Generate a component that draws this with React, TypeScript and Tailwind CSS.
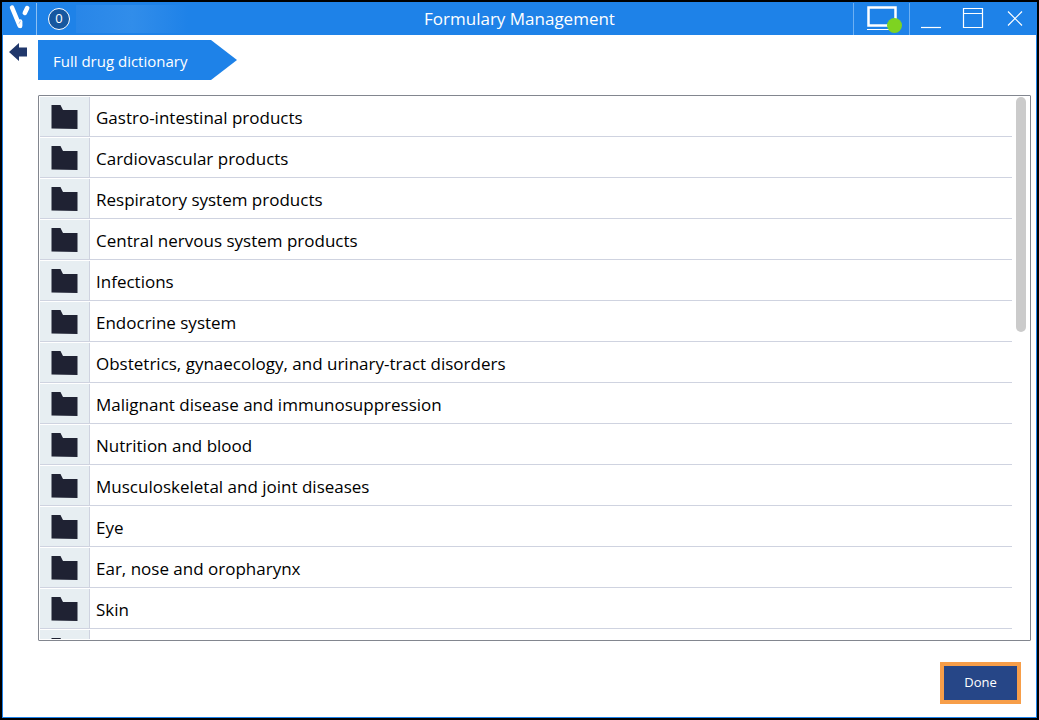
const categories = [
  "Gastro-intestinal products",
  "Cardiovascular products",
  "Respiratory system products",
  "Central nervous system products",
  "Infections",
  "Endocrine system",
  "Obstetrics, gynaecology, and urinary-tract disorders",
  "Malignant disease and immunosuppression",
  "Nutrition and blood",
  "Musculoskeletal and joint diseases",
  "Eye",
  "Ear, nose and oropharynx",
  "Skin",
];

export default function App() {
  return (
    <div className="h-screen border-2 border-black font-['Open_Sans','Noto_Sans',sans-serif]">
      <div className="flex h-full flex-col border border-[#1e82e8] bg-white">
        <TitleBar />

        {/* Breadcrumb */}
        <nav className="flex items-start pt-[5px]">
          <button aria-label="Back" className="flex h-6 w-[35px] shrink-0 items-center pl-1.5">
            <svg width="18" height="18" viewBox="0 0 18 18" fill="#20376b">
              <path d="M0 9 10 0v4.5H18v9H10V18Z" />
            </svg>
          </button>
          <a href="#dictionary" className="flex h-10 text-[15px] text-white">
            <span className="flex items-center bg-[#1e82e8] pt-0.5 pr-6 pl-[15px]">Full drug dictionary</span>
            <svg width="26" height="40" viewBox="0 0 26 40" fill="#1e82e8">
              <path d="M0 0 26 20 0 40Z" />
            </svg>
          </a>
        </nav>

        <main className="mt-[15px] mr-[5px] ml-[35px] flex min-h-0 flex-1 rounded-[1px] border border-[#82868f] px-px pb-px">
          <ul className="min-w-0 flex-1 overflow-hidden">
            {categories.map((name) => (
              <CategoryRow key={name} name={name} />
            ))}
            <CategoryRow name="" />
          </ul>
          <div className="ml-1 w-[13px] shrink-0 pt-px">
            <div className="h-[235px] w-2.5 rounded-full bg-[#cbcbcb]" />
          </div>
        </main>

        <footer className="flex justify-end pt-[21px] pr-[15px] pb-[13px]">
          <button className="h-[42px] w-[81px] border-4 border-[#f79e49] bg-[#264687] text-[13px] text-white">Done</button>
        </footer>
      </div>
    </div>
  );
}

function TitleBar() {
  return (
    <header className="grid h-8 shrink-0 grid-cols-[1fr_auto_1fr] items-center bg-[#1e82e8] text-white">
      <div className="flex h-8 items-center">
        <div className="h-8 w-[34px] border-r border-[#8dc0f4]">
          <svg width="33" height="32" viewBox="0 0 33 32" fill="none" stroke="white" strokeLinecap="round">
            <path d="M9 4.5 16.5 22.5" strokeWidth="4.5" />
            <path d="M17.2 18.5V23" strokeWidth="4.4" />
            <path d="M16 20.5 17.5 18" stroke="#1e82e8" strokeWidth="0.4" />
            <path d="M21.8 10 24.2 5" strokeWidth="4.5" />
          </svg>
        </div>
        <span className="ml-[11px] flex size-[22px] items-center justify-center rounded-full border border-white bg-[#16579f] text-[13px]">
          0
        </span>
        <div className="ml-1.5 h-7 w-28 bg-linear-to-r from-[#2886e8] via-[#318dea] to-[#1e82e8]" />
      </div>

      <h1 className="text-[17px]">Formulary Management</h1>

      <div className="flex h-8 justify-end">
        <div className="w-[57px] border-x border-[#6db0f3]">
          <svg width="55" height="32" viewBox="0 0 55 32" fill="none" stroke="white">
            <rect x="14.5" y="4.5" width="27" height="18" strokeWidth="2.5" />
            <path d="M13 26.5h28" />
            <circle cx="40.5" cy="22.5" r="7.5" fill="#7ed321" stroke="none" />
          </svg>
        </div>
        <WindowButton label="Minimise" path="M11 24.5h20" />
        <WindowButton label="Maximise" path="M11.5 5.5h19v19h-19zM11.5 10.5h19" />
        <WindowButton label="Close" path="M14 8.5 28 22.5M28 8.5 14 22.5" />
      </div>
    </header>
  );
}

function WindowButton({ label, path }: { label: string; path: string }) {
  return (
    <button aria-label={label} className="h-8 w-[42px]">
      <svg width="42" height="32" viewBox="0 0 42 32" fill="none" stroke="white" strokeWidth="1.2">
        <path d={path} />
      </svg>
    </button>
  );
}

function CategoryRow({ name }: { name: string }) {
  return (
    <li className="h-[41px] border-b border-[#cfd3e0] pt-px">
      <button className="flex h-full w-full items-center text-left text-[17px] text-black" aria-label={name || "More"}>
        <span className="flex h-full w-[50px] items-center border-r border-[#cfd3e0] bg-[#e7eef2] pl-[11px]">
          <svg width="27" height="24" viewBox="0 0 27 24" fill="#1f2233">
            <path d="M.5 0H9.5L12 5H26.5V24L.5 23.5Z" />
          </svg>
        </span>
        <span className="pt-0.5 pl-1.5">{name}</span>
      </button>
    </li>
  );
}
